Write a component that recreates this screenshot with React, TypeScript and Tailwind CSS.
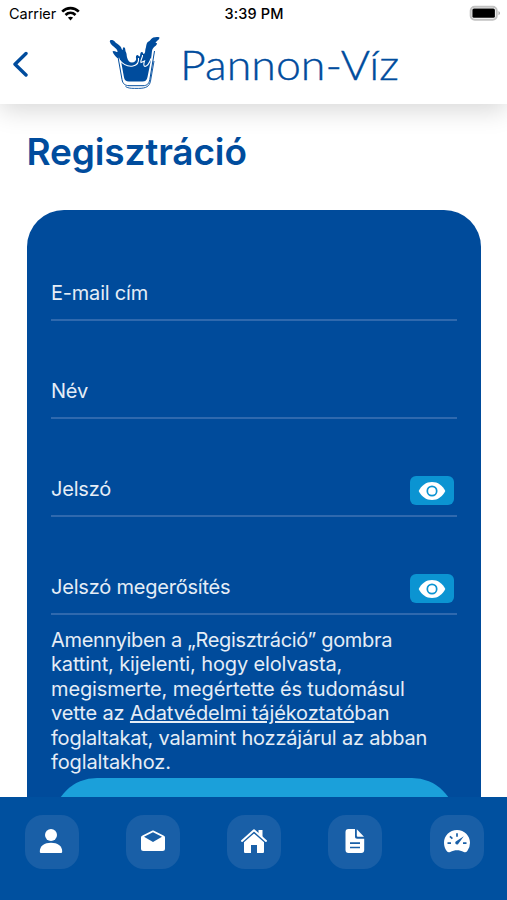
import React from "react"

interface FieldProps {
  label: string
  secret?: boolean
}

const EyeIcon: React.FC = () => (
  <svg width="28" height="20" viewBox="0 0 28 20" fill="none">
    <path d="M.7 10C3.400 4.400 8.200 1 14 1s10.600 3.400 13.300 9C24.600 15.600 19.800 19 14 19S3.400 15.600.7 10Z" fill="#fff" />
    <circle cx="14" cy="10" r="4.700" stroke="#0b94d2" strokeWidth="1.700" />
  </svg>
)

const Field: React.FC<FieldProps> = ({ label, secret = false }) => (
  <div className="flex h-[98.200px] items-end border-b-2 border-[#2f69ae] pb-[10px]">
    <div className="flex h-[30px] w-full items-center justify-between pr-[2.500px]">
      <span className="pb-[2px] text-[20px] leading-[28px] tracking-[-0.210px]">{label}</span>
      {secret && (
        <button className="mt-[1px] flex h-[29px] w-[44px] items-center justify-center rounded-[6px] bg-[#0b94d2]">
          <EyeIcon />
        </button>
      )}
    </div>
  </div>
)

const StatusBar: React.FC = () => (
  <div className="flex h-[28px] items-center justify-between pl-[9px] pr-[6px] text-[14.500px] text-black">
    <div className="flex w-[150px] items-center gap-[6px]">
      <span className="tracking-[-0.050px]">Carrier</span>
      <svg className="-ml-[1px] -mt-[2px]" width="19" height="15" viewBox="0 0 19 15" fill="none" stroke="#000" strokeWidth="2.700">
        <path d="M1.200 5.600C6 1 13 1 17.800 5.600" />
        <path d="M4.500 9C7.500 6.200 11.500 6.200 14.500 9" />
        <path d="M9.500 14.500 6.900 11.600c1.600-1.300 3.600-1.300 5.200 0Z" fill="#000" stroke="none" />
      </svg>
    </div>
    <span className="mr-[2px] font-medium tracking-[0.150px]">3:39 PM</span>
    <div className="flex w-[150px] justify-end">
      <svg className="-mt-[2px]" width="32" height="16" viewBox="0 0 32 16">
        <rect x="1.700" y="1.700" width="26" height="13" rx="4" fill="#fff" stroke="#c2c2c2" strokeWidth="2" />
        <rect x="3.400" y="3.500" width="22.500" height="9.200" rx="1.500" fill="#000" />
        <path d="M29.500 6c2 .8 2 3.500 0 4.200Z" fill="#aaa" />
      </svg>
    </div>
  </div>
)

const GlassLogo: React.FC = () => (
  <svg width="52" height="54" viewBox="0 0 52 54" fill="none">
    <path
      d="M1 5C0 2.500 3.500 2.300 5.500 4.300 7 6.500 9.500 7 11.500 9.500c1 1.300 1 3 2 3.500.8-.8-.2-2.500 1.200-2.800 2 0 1.300 3 2.300 5 .8 1.500.5 3 1 5 .8 3.500 2.500 5.300 5 5.300 2.500 0 3.700-1.500 4.200-3.500-.5-1.500-.5-4 1.300-4 1 0 1 1.500 2 1.500 1.300-.5 0-4 2.300-4.500 1.500 0 1 2 2 2 2-1 1-4 2-6 .5-2 .5-4 1.500-5.500 1-1.500 2.500-1 3.500-3C43 .3 48-.5 50.500.5c0 2.500-3 3-4 5.500 2-.5 2 1 .5 2.500-2.500 1.500-3.500 3-4 5.500l-1 9-3.500 17c-.6 3-2 4.500-5 4.500H20c-3 0-4.500-1.500-5-4L12 24C7 20.500 4.500 17.500 3.500 14.500c1.500-1.500 3.500.5 5 .5C9 11 1.500 9 1 5Z"
      fill="#004c9d"
    />
    <path d="M10 22.500c4 5 9.500 7.300 14 6.500 4-.8 6-3.500 5.500-8M33.500 18c.5 2.500-2.300 4.500-1.500 7.500l3.500-1.500c-1 3-1 5 .5 5.500 2.500-.5 4.500-3.500 6-8" stroke="#fff" strokeWidth="1.100" />
    <path d="m9 21 4 21.500c.8 4.500 3 6 7 6.200h14c4 0 6-2 6.800-6L45 14" stroke="#fff" strokeWidth="2.600" />
    <path d="m9.200 21 3.800 21.500c.8 4.500 3 6 7 6.200h14c4 0 6-2 6.800-6L45.500 14" stroke="#004c9d" strokeWidth="1" />
    <path d="M16.500 49.500c2 1.500 5 1.900 9 1.900h4c7.500 0 11-2 12-7.300L45 24" stroke="#004c9d" strokeWidth=".9" />
  </svg>
)

const Header: React.FC = () => (
  <header className="relative z-10 h-[104px] shrink-0 bg-white shadow-[0_6px_24px_rgba(0,0,0,0.160)]">
    <StatusBar />
    <div className="flex h-[76px] items-start pl-[12px] pt-[9px]">
      <button className="mt-[14px] w-[97px]">
        <svg width="17" height="26" viewBox="0 0 17 26" fill="none" stroke="#004c9d" strokeWidth="3.400" strokeLinecap="round" strokeLinejoin="round">
          <path d="M14 2.500 3 13.200 14 24" />
        </svg>
      </button>
      <GlassLogo />
      <svg className="ml-[19px]" width="222" height="54" viewBox="0 0 222 54">
        <text x="0" y="43" textLength="219" lengthAdjust="spacingAndGlyphs" strokeWidth=".35" className="fill-[#004c9d] stroke-[#004c9d] font-['Lato'] text-[40.500px] font-light">
          Pannon-Víz
        </text>
      </svg>
    </div>
  </header>
)

const PersonIcon: React.FC = () => (
  <svg className="-ml-[2px]" width="24" height="26" viewBox="0 0 24 26" fill="#fff">
    <circle cx="12" cy="7" r="6" />
    <path d="M.8 23.500C.8 18 5.500 14.700 12 14.700S23.200 18 23.200 23.500c0 1-.6 1.500-1.500 1.500H2.300C1.400 25 .8 24.500.8 23.500Z" />
  </svg>
)

const EnvelopeIcon: React.FC = () => (
  <svg width="26" height="24" viewBox="0 0 26 24">
    <path d="M2.500 6.500 12 1.700c.7-.3 1.300-.3 2 0l9.500 4.800c1 .5 1.500 1 1.500 2.200v10.800c0 1.700-.8 2.500-2.500 2.500h-19C1.800 22 1 21.200 1 19.500V8.700C1 7.500 1.500 7 2.500 6.500Z" fill="#fff" />
    <path d="M4 7.700 13 3.200l9 4.500-9 5.200Z" fill="#195fa7" />
  </svg>
)

const HomeIcon: React.FC = () => (
  <svg width="28" height="26" viewBox="0 0 28 26">
    <path d="M18.500 2h4v8l-4-4ZM4 13 14 4l10 9v10.500c0 1-.5 1.500-1.500 1.500H17v-8h-6v8H5.500C4.500 25 4 24.500 4 23.500Z" fill="#fff" />
    <path d="M2 14.300 14 3.800l12 10.500" stroke="#195fa7" strokeWidth="2.600" fill="none" />
    <path d="M2 12.900 14 2.200l12 10.700" stroke="#fff" strokeWidth="2" fill="none" strokeLinecap="round" strokeLinejoin="round" />
  </svg>
)

const DocumentIcon: React.FC = () => (
  <svg width="22" height="26" viewBox="0 0 22 26">
    <path d="M4.500 1H11v7.500c0 1.500.7 2.200 2.200 2.200h7V22c0 2-1 3-3 3H4.500c-2 0-3-1-3-3V4c0-2 1-3 3-3Z" fill="#fff" />
    <path d="M12.800 1.300 20 8.800h-5.700c-1 0-1.500-.5-1.500-1.500Z" fill="#fff" />
    <path d="M6 15.200h10M6 19.500h10" stroke="#195fa7" strokeWidth="1.700" />
  </svg>
)

const GaugeIcon: React.FC = () => (
  <svg width="28" height="26" viewBox="0 0 28 26">
    <path d="M14 2C6.600 2 1 7.700 1 14.800c0 3.200 1 6 2.700 8.200 1 1.300 2 1.600 3.500 1 4.500-2.400 9.100-2.400 13.600 0 1.500.6 2.500.3 3.500-1A13 13 0 0 0 27 14.800C27 7.700 21.400 2 14 2Z" fill="#fff" />
    <path d="M4.500 15.200H8M20 15.200h3.500M6.900 8.300l2.500 2.300M14 5.300v3.400" stroke="#195fa7" strokeWidth="1.700" />
    <path d="m20.800 8.300-5.300 7.200a1.700 1.700 0 1 1-2.300-2.200Z" fill="#195fa7" />
  </svg>
)

const tabs = [
  { id: 'profile', label: 'Profil', icon: <PersonIcon /> },
  { id: 'mail', label: 'Üzenetek', icon: <EnvelopeIcon /> },
  { id: 'home', label: 'Kezdőlap', icon: <HomeIcon /> },
  { id: 'documents', label: 'Dokumentumok', icon: <DocumentIcon /> },
  { id: 'meter', label: 'Mérőóra', icon: <GaugeIcon /> },
]

const TabBar: React.FC = () => (
  <nav className="flex h-[103px] shrink-0 justify-between bg-[#00509f] pl-[24.500px] pr-[23.500px] pt-[17.500px]">
    {tabs.map(tab => (
      <button key={tab.id} aria-label={tab.label} className="flex h-[54px] w-[54px] items-center justify-center rounded-[18px] bg-[#195fa7] pb-[2px]">
        {tab.icon}
      </button>
    ))}
  </nav>
)

export default function App() {
  return (
    <div className="flex h-[900px] w-[507px] flex-col overflow-hidden bg-white font-['Inter',sans-serif]">
      <Header />
      <main className="flex min-h-0 flex-1 flex-col overflow-hidden pl-[26.500px] pr-[26px]">
        <h1 className="mt-[24px] h-[82px] shrink-0 text-[37px] font-semibold leading-[48px] tracking-[-0.150px] text-[#004c9d]">Regisztráció</h1>
        <form className="h-[700px] shrink-0 rounded-t-[37px] bg-[#004b9b] px-[24.500px] pt-[12.500px] text-[#e5edf6]">
          <Field label="E-mail cím" />
          <Field label="Név" />
          <Field label="Jelszó" secret />
          <Field label="Jelszó megerősítés" secret />
          <p className="mt-[12.500px] whitespace-nowrap text-[20px] leading-[24.500px] tracking-[-0.130px]">
            <span className="tracking-[-0.330px]">Amennyiben a „Regisztráció” gombra</span><br />
            kattint, kijelenti, hogy elolvasta,<br />
            megismerte, megértette és tudomásul<br />
            vette az <a className="underline">Adatvédelmi tájékoztató</a>ban<br />
            <span className="tracking-[-0.210px]">foglaltakat, valamint hozzájárul az abban</span><br />
            foglaltakhoz.
          </p>
          <button className="ml-[2px] mt-[3.500px] h-[90px] w-[403px] rounded-[44px] bg-[#1ba0da]" />
        </form>
      </main>
      <TabBar />
    </div>
  )
}
